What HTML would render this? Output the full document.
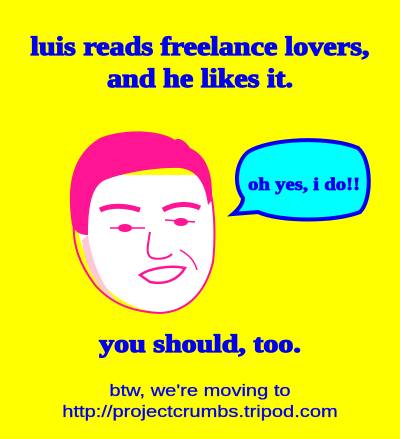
<!DOCTYPE html>
<html><head><style>
html,body{margin:0;padding:0;background:#ffff00;width:400px;height:439px;overflow:hidden;position:relative}
.t{position:absolute;left:0;width:400px;text-align:center;color:#0000ee;font-family:"Liberation Serif",serif;font-weight:bold;white-space:nowrap;-webkit-text-stroke:1.2px #0000ee}
.s{position:absolute;left:0;width:400px;text-align:center;color:#0000ee;font-family:"Liberation Sans",sans-serif;white-space:nowrap;font-size:17px;-webkit-text-stroke:0.3px #0000ee}
</style></head><body>
<div class="t" style="top:32px;font-size:26px;transform:scaleX(1.16)">luis reads freelance lovers,</div>
<div class="t" style="top:64px;font-size:26px;transform:scaleX(1.16)">and he likes it.</div>
<svg width="400" height="439" style="position:absolute;left:0;top:0">
  <path d="M80,175 C70,210 78,245 95,275 C110,295 130,310 160,312 C185,312 205,295 212,260 C216,230 214,200 210,175 Z" fill="#ffffff"/>
  <path d="M82,240 C85,270 100,292 120,305 C105,290 92,265 88,235 Z" fill="#ffc8d8"/>
  <path d="M72,225 C66,185 72,155 100,138 C125,128 160,130 175,140 C178,137 185,140 190,148 C205,155 213,170 212,200 L208,205 C205,180 195,170 180,168 C160,167 125,172 105,180 C92,186 88,205 88,235 C80,235 75,232 72,225 Z" fill="#ff1493"/>
  <path d="M74,220 C72,245 80,265 95,285 C110,302 130,312 160,313 C185,312 205,295 213,262 C216,235 214,205 210,190" fill="none" stroke="#ff1493" stroke-width="2"/>
  <path d="M100,210 C110,205 125,205 140,210" stroke="#ff1493" stroke-width="5" fill="none"/>
  <path d="M163,210 C175,203 190,203 200,208" stroke="#ff1493" stroke-width="5" fill="none"/>
  <ellipse cx="125" cy="228" rx="7" ry="4" fill="#ff1493"/>
  <ellipse cx="181" cy="222" rx="7" ry="4" fill="#ff1493"/>
  <path d="M110,228 L145,228 M165,220 L195,222" stroke="#ff1493" stroke-width="1.5"/>
  <path d="M150,232 C148,245 145,255 152,258 C160,260 168,258 172,254" stroke="#ff1493" stroke-width="2" fill="none"/>
  <path d="M140,275 C150,268 170,265 185,268 C178,280 165,285 150,282 Z" fill="#fff" stroke="#ff1493" stroke-width="2.5"/>
  <path d="M180,250 C190,255 195,262 197,270" stroke="#ff1493" stroke-width="1.5" fill="none"/>
  <path d="M248,152 C270,138 330,136 358,148 C372,160 372,200 360,212 C335,222 280,222 258,212 L233,214 C240,208 243,203 243,198 C233,185 236,162 248,152 Z" fill="#00ffff" stroke="#0000ee" stroke-width="4"/>
  <text x="304" y="190" text-anchor="middle" font-family="Liberation Serif,serif" font-weight="bold" font-size="18" fill="#0000ee" stroke="#0000ee" stroke-width="0.8" textLength="112" lengthAdjust="spacingAndGlyphs">oh yes, i do!!</text>
</svg>
<div class="t" style="top:331px;font-size:25px;transform:scaleX(1.2)">you should, too.</div>
<div class="s" style="top:381px;transform:scaleX(1.18)">btw, we're moving to</div>
<div class="s" style="top:402px;transform:scaleX(1.18)">http://projectcrumbs.tripod.com</div>
</body></html>
